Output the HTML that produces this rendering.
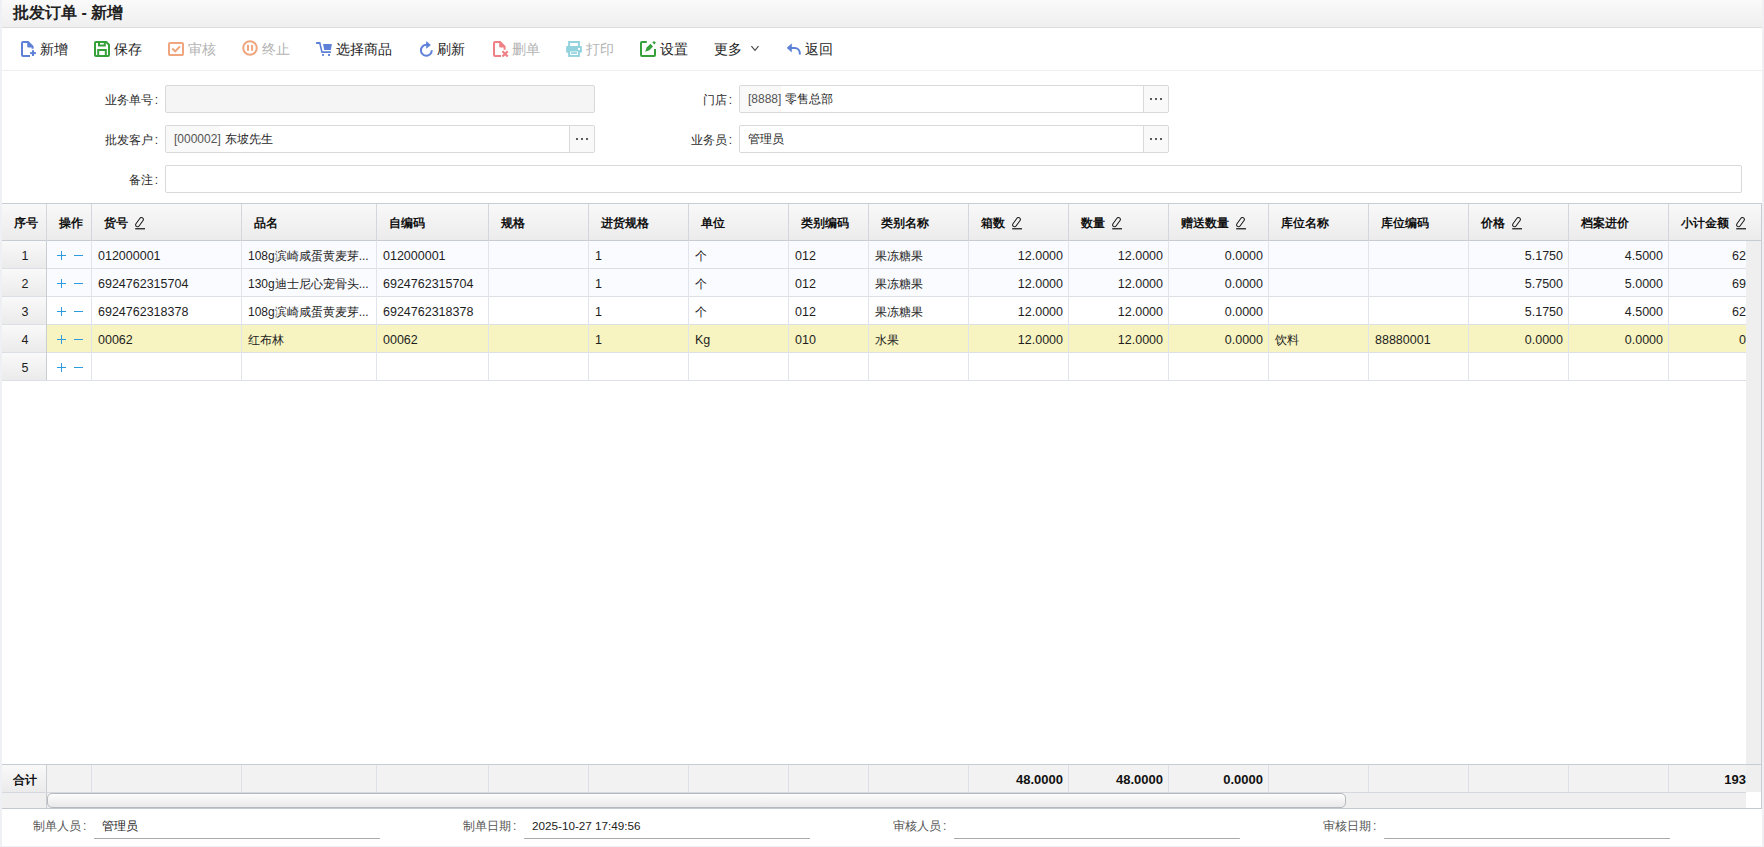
<!DOCTYPE html><html><head><meta charset="utf-8"><style>

*{box-sizing:border-box;margin:0;padding:0}
html,body{width:1764px;height:847px;overflow:hidden;background:#eef0f4;font-family:"Liberation Sans",sans-serif;color:#333}
.abs{position:absolute}
#pg{position:absolute;left:2px;top:0;width:1760px;height:846px;background:#fff;overflow:hidden}
.t{position:absolute;white-space:nowrap;line-height:14px}
.tb{position:absolute;white-space:nowrap;font-size:14px;line-height:16px;color:#1e1e1e}
.tb.dis{color:#b3b3b3}
.ic{position:absolute}
.lbl{position:absolute;font-size:12px;line-height:14px;color:#2a2a2a;text-align:right;white-space:nowrap}
.inp{position:absolute;border:1px solid #d9d9d9;border-radius:2px;background:#fff;height:28px}
.btn{position:absolute;top:0;bottom:0;width:25px;right:0;border-left:1px solid #d9d9d9;background:#f9f9f9;border-radius:0 2px 2px 0}
.dots{position:absolute;top:12px;left:6px;width:2px;height:2px;background:#5a5a5a;box-shadow:5px 0 0 #5a5a5a,10px 0 0 #5a5a5a}
.hl{position:absolute;height:1px}
.vl{position:absolute;width:1px}
.hd{position:absolute;font-size:12px;line-height:14px;font-weight:bold;color:#111;white-space:nowrap}
.cell{position:absolute;font-size:12px;line-height:14px;color:#1e1e1e;white-space:nowrap}
.r{text-align:right}

</style></head><body>
<div id="pg">
<div class="abs" style="left:0;top:0;width:1760px;height:27px;background:linear-gradient(#fafafa,#efefef)"></div>
<div class="hl" style="left:0;top:27px;width:1760px;background:#dddddd"></div>
<div class="t" style="left:11px;top:4px;font-size:16px;line-height:18px;font-weight:bold;color:#222">批发订单 - 新增</div>
<div class="hl" style="left:0;top:70px;width:1760px;background:#eeeeee"></div>
<div class="ic" style="left:16px;top:38px;width:22px;height:22px"><svg width="22" height="22" viewBox="0 0 22 22"><g fill="#5e81d7">
<path d="M3 5 Q3 3 5 3 H10.5 L15.6 8.2 V10.8 H13.6 V9.6 H10.5 Q9.2 9.6 9.2 8.3 V5 H5 V17 H12 V19 H5 Q3 19 3 17 Z"/>
<rect x="14" y="12.2" width="2" height="5.8"/><rect x="12.1" y="14.1" width="5.8" height="2"/></g></svg></div>
<div class="tb" style="left:38px;top:41px">新增</div>
<div class="ic" style="left:89px;top:38px;width:22px;height:22px"><svg width="22" height="22" viewBox="0 0 22 22"><g fill="none" stroke="#36a03b" stroke-width="2">
<path d="M5 4 H15.3 L18 6.7 V17 Q18 18 17 18 H5 Q4 18 4 17 V5 Q4 4 5 4 Z"/>
<path d="M8 4 V7.6 H13.8 V4"/><path d="M7.2 18 V12 H14.8 V18"/></g></svg></div>
<div class="tb" style="left:112px;top:41px">保存</div>
<div class="ic" style="left:163px;top:38px;width:22px;height:22px"><svg width="22" height="22" viewBox="0 0 22 22"><g fill="none" stroke="#efa67e" stroke-width="2">
<rect x="4" y="4.9" width="14" height="12.2" rx="1.2"/>
<path d="M7.2 10.4 L10.3 13.3 L15 8.4"/></g></svg></div>
<div class="tb dis" style="left:186px;top:41px">审核</div>
<div class="ic" style="left:237px;top:37px;width:22px;height:22px"><svg width="22" height="22" viewBox="0 0 22 22"><g fill="none" stroke="#efa67e" stroke-width="2">
<circle cx="11" cy="11" r="6.8"/></g><g fill="#efa67e"><rect x="8" y="7.8" width="2" height="6"/><rect x="12.1" y="7.8" width="2" height="6"/></g></svg></div>
<div class="tb dis" style="left:260px;top:41px">终止</div>
<div class="ic" style="left:311px;top:37px;width:22px;height:22px"><svg width="22" height="22" viewBox="0 0 22 22"><g fill="#5e81d7">
<path d="M3.1 5 H7.4 L9.6 14.2 H17.9 V15.9 H8.4 L6.2 7 H3.1 Z"/>
<path d="M10.1 7 H18.9 L17.8 12.9 H11.2 Z"/>
<rect x="9.1" y="17" width="1.8" height="1.9"/><rect x="15" y="17" width="2" height="1.9"/></g></svg></div>
<div class="tb" style="left:334px;top:41px">选择商品</div>
<div class="ic" style="left:413px;top:37px;width:22px;height:22px"><svg width="22" height="22" viewBox="0 0 22 22"><g fill="none" stroke="#5e81d7" stroke-width="2">
<path d="M16.8 13.3 A5.45 5.45 0 1 1 11.35 7.85 H12.5"/></g>
<path fill="#5e81d7" d="M11.2 4.1 L15.9 7.9 L11.2 11.8 Z"/></svg></div>
<div class="tb" style="left:435px;top:41px">刷新</div>
<div class="ic" style="left:488px;top:38px;width:22px;height:22px"><svg width="22" height="22" viewBox="0 0 22 22"><g fill="#ef8085">
<path d="M3 5 Q3 3 5 3 H10.5 L15.6 8.2 V11.8 H13.6 V9.6 H10.5 Q9.2 9.6 9.2 8.3 V5 H5 V17 H11 V19 H5 Q3 19 3 17 Z"/></g>
<path d="M13.2 14 L17 17.8 M17 14 L13.2 17.8" stroke="#ef8085" stroke-width="2.2" stroke-linecap="square"/></svg></div>
<div class="tb dis" style="left:510px;top:41px">删单</div>
<div class="ic" style="left:561px;top:38px;width:22px;height:22px"><svg width="22" height="22" viewBox="0 0 22 22"><g fill="#92d3de">
<path d="M5.1 3.1 H16.9 V8.2 H14.9 V5.1 H7.1 V8.2 H5.1 Z"/>
<path d="M4.3 8 H17.7 Q18.9 8 18.9 9.2 V13.6 Q18.9 14.8 17.7 14.8 H4.3 Q3.1 14.8 3.1 13.6 V9.2 Q3.1 8 4.3 8 Z M15 9.9 V11.9 H17 V9.9 Z"/>
<rect x="5.1" y="12.2" width="11.8" height="6.7"/></g>
<rect x="7.1" y="13.5" width="7.8" height="3.5" fill="#fff"/>
<rect x="8.1" y="14.2" width="5.8" height="1.7" fill="#92d3de"/></svg></div>
<div class="tb dis" style="left:584px;top:41px">打印</div>
<div class="ic" style="left:635px;top:38px;width:22px;height:22px"><svg width="22" height="22" viewBox="0 0 22 22"><g fill="none" stroke="#36a03b" stroke-width="2">
<path d="M9.8 4 H5 Q4 4 4 5 V17 Q4 18 5 18 H17 Q18 18 18 17 V11"/></g>
<path fill="#36a03b" d="M8.2 13.8 L9.6 9.4 L13.5 5.8 L16 8.4 L12.4 12.2 Z"/>
<path fill="#36a03b" d="M15.3 4.6 L17 3 L18.9 4.8 L17.3 6.4 Z"/></svg></div>
<div class="tb" style="left:658px;top:41px">设置</div>
<div class="ic" style="left:781px;top:38px;width:22px;height:22px"><svg width="22" height="22" viewBox="0 0 22 22">
<path fill="#5e81d7" stroke="#5e81d7" stroke-width="0.8" stroke-linejoin="round" d="M4.2 9.9 L8.4 6.1 V13.7 Z"/>
<path fill="none" stroke="#5e81d7" stroke-width="2" d="M8 9.9 H11.8 A5 5 0 0 1 16.8 14.9 V16.6"/></svg></div>
<div class="tb" style="left:803px;top:41px">返回</div>
<div class="tb" style="left:712px;top:41px">更多</div>
<svg class="ic" style="left:746px;top:43px" width="14" height="10" viewBox="0 0 14 10"><path d="M3.4 3.2 L7 7.4 L10.5 3.2" fill="none" stroke="#444" stroke-width="1.1"/></svg>
<div class="lbl" style="left:13px;width:150px;top:93px;padding-right:7px">业务单号<span style="margin-left:2px">:</span></div>
<div class="inp" style="left:163px;top:85px;width:430px;background:#f5f5f5"></div>
<div class="lbl" style="left:587px;width:150px;top:93px;padding-right:7px">门店<span style="margin-left:2px">:</span></div>
<div class="inp" style="left:737px;top:85px;width:430px;background:#fff"><div class="abs" style="left:0;top:0;width:41px;height:26px;background:#f9f9f9;border-radius:3px 0 0 3px"></div><div class="cell" style="left:8px;top:6px;color:#555">[8888]</div><div class="cell" style="left:45px;top:6px;">零售总部</div><div class="btn"><div class="dots"></div></div></div>
<div class="lbl" style="left:13px;width:150px;top:133px;padding-right:7px">批发客户<span style="margin-left:2px">:</span></div>
<div class="inp" style="left:163px;top:125px;width:430px;background:#fff"><div class="abs" style="left:0;top:0;width:54px;height:26px;background:#f9f9f9;border-radius:3px 0 0 3px"></div><div class="cell" style="left:8px;top:6px;color:#555">[000002]</div><div class="cell" style="left:59px;top:6px;">东坡先生</div><div class="btn"><div class="dots"></div></div></div>
<div class="lbl" style="left:587px;width:150px;top:133px;padding-right:7px">业务员<span style="margin-left:2px">:</span></div>
<div class="inp" style="left:737px;top:125px;width:430px;background:#fff"><div class="cell" style="left:8px;top:6px">管理员</div><div class="btn"><div class="dots"></div></div></div>
<div class="lbl" style="left:13px;width:150px;top:173px;padding-right:7px">备注<span style="margin-left:2px">:</span></div>
<div class="inp" style="left:163px;top:165px;width:1577px;background:#fff"></div>
<div class="abs" style="left:0;top:203px;width:1760px;height:38px;background:linear-gradient(#f9f9f9,#ebebeb)"></div>
<div class="hl" style="left:0;top:203px;width:1760px;background:#c6ccd2"></div>
<div class="hl" style="left:0;top:240px;width:1760px;background:#c6ccd2"></div>
<div class="hd" style="left:2px;width:44px;text-align:center;top:216px">序号</div>
<div class="hd" style="left:46px;width:45px;text-align:center;top:216px">操作</div>
<div class="vl" style="left:44px;top:204px;height:37px;background:#d3d7dc"></div>
<div class="hd" style="left:102px;top:216px">货号</div>
<svg width="12" height="14" viewBox="0 0 12 14" style="position:absolute;left:133px;top:216px"><rect x="-5.3" y="-1.9" width="10.6" height="3.8" rx="1.9" transform="translate(4.5 6.1) rotate(-54)" fill="none" stroke="#1a1a1a" stroke-width="1.05"/><rect x="0.2" y="12.1" width="9.8" height="1.3" fill="#222"/></svg>
<div class="vl" style="left:89px;top:204px;height:37px;background:#d3d7dc"></div>
<div class="hd" style="left:252px;top:216px">品名</div>
<div class="vl" style="left:239px;top:204px;height:37px;background:#d3d7dc"></div>
<div class="hd" style="left:387px;top:216px">自编码</div>
<div class="vl" style="left:374px;top:204px;height:37px;background:#d3d7dc"></div>
<div class="hd" style="left:499px;top:216px">规格</div>
<div class="vl" style="left:486px;top:204px;height:37px;background:#d3d7dc"></div>
<div class="hd" style="left:599px;top:216px">进货规格</div>
<div class="vl" style="left:586px;top:204px;height:37px;background:#d3d7dc"></div>
<div class="hd" style="left:699px;top:216px">单位</div>
<div class="vl" style="left:686px;top:204px;height:37px;background:#d3d7dc"></div>
<div class="hd" style="left:799px;top:216px">类别编码</div>
<div class="vl" style="left:786px;top:204px;height:37px;background:#d3d7dc"></div>
<div class="hd" style="left:879px;top:216px">类别名称</div>
<div class="vl" style="left:866px;top:204px;height:37px;background:#d3d7dc"></div>
<div class="hd" style="left:979px;top:216px">箱数</div>
<svg width="12" height="14" viewBox="0 0 12 14" style="position:absolute;left:1010px;top:216px"><rect x="-5.3" y="-1.9" width="10.6" height="3.8" rx="1.9" transform="translate(4.5 6.1) rotate(-54)" fill="none" stroke="#1a1a1a" stroke-width="1.05"/><rect x="0.2" y="12.1" width="9.8" height="1.3" fill="#222"/></svg>
<div class="vl" style="left:966px;top:204px;height:37px;background:#d3d7dc"></div>
<div class="hd" style="left:1079px;top:216px">数量</div>
<svg width="12" height="14" viewBox="0 0 12 14" style="position:absolute;left:1110px;top:216px"><rect x="-5.3" y="-1.9" width="10.6" height="3.8" rx="1.9" transform="translate(4.5 6.1) rotate(-54)" fill="none" stroke="#1a1a1a" stroke-width="1.05"/><rect x="0.2" y="12.1" width="9.8" height="1.3" fill="#222"/></svg>
<div class="vl" style="left:1066px;top:204px;height:37px;background:#d3d7dc"></div>
<div class="hd" style="left:1179px;top:216px">赠送数量</div>
<svg width="12" height="14" viewBox="0 0 12 14" style="position:absolute;left:1234px;top:216px"><rect x="-5.3" y="-1.9" width="10.6" height="3.8" rx="1.9" transform="translate(4.5 6.1) rotate(-54)" fill="none" stroke="#1a1a1a" stroke-width="1.05"/><rect x="0.2" y="12.1" width="9.8" height="1.3" fill="#222"/></svg>
<div class="vl" style="left:1166px;top:204px;height:37px;background:#d3d7dc"></div>
<div class="hd" style="left:1279px;top:216px">库位名称</div>
<div class="vl" style="left:1266px;top:204px;height:37px;background:#d3d7dc"></div>
<div class="hd" style="left:1379px;top:216px">库位编码</div>
<div class="vl" style="left:1366px;top:204px;height:37px;background:#d3d7dc"></div>
<div class="hd" style="left:1479px;top:216px">价格</div>
<svg width="12" height="14" viewBox="0 0 12 14" style="position:absolute;left:1510px;top:216px"><rect x="-5.3" y="-1.9" width="10.6" height="3.8" rx="1.9" transform="translate(4.5 6.1) rotate(-54)" fill="none" stroke="#1a1a1a" stroke-width="1.05"/><rect x="0.2" y="12.1" width="9.8" height="1.3" fill="#222"/></svg>
<div class="vl" style="left:1466px;top:204px;height:37px;background:#d3d7dc"></div>
<div class="hd" style="left:1579px;top:216px">档案进价</div>
<div class="vl" style="left:1566px;top:204px;height:37px;background:#d3d7dc"></div>
<div class="hd" style="left:1679px;top:216px">小计金额</div>
<svg width="12" height="14" viewBox="0 0 12 14" style="position:absolute;left:1734px;top:216px"><rect x="-5.3" y="-1.9" width="10.6" height="3.8" rx="1.9" transform="translate(4.5 6.1) rotate(-54)" fill="none" stroke="#1a1a1a" stroke-width="1.05"/><rect x="0.2" y="12.1" width="9.8" height="1.3" fill="#222"/></svg>
<div class="vl" style="left:1666px;top:204px;height:37px;background:#d3d7dc"></div>
<div class="abs" style="left:0;top:241px;width:1744px;height:140px;overflow:hidden">
<div class="abs" style="left:45px;top:0px;width:1699px;height:27px;background:#fafbfe"></div>
<div class="abs" style="left:0;top:0px;width:44px;height:27px;background:linear-gradient(#f9f9f9,#ebebeb)"></div>
<div class="hl" style="left:0;top:27px;width:1744px;background:#dcdfe4"></div>
<div class="cell" style="left:1px;width:44px;text-align:center;top:8px;font-size:12.5px">1</div>
<div class="abs" style="left:55px;top:10px;width:9px;height:1px;top:14px;background:#2d9be0"></div>
<div class="abs" style="left:59px;top:10px;width:1px;height:9px;background:#2d9be0"></div>
<div class="abs" style="left:72px;top:14px;width:9px;height:1px;background:#2d9be0"></div>
<div class="cell" style="left:96px;top:8px;font-size:12.5px">012000001</div>
<div class="cell" style="left:246px;top:8px">108g滨崎咸蛋黄麦芽...</div>
<div class="cell" style="left:381px;top:8px;font-size:12.5px">012000001</div>
<div class="cell" style="left:593px;top:8px;font-size:12.5px">1</div>
<div class="cell" style="left:693px;top:8px">个</div>
<div class="cell" style="left:793px;top:8px;font-size:12.5px">012</div>
<div class="cell" style="left:873px;top:8px">果冻糖果</div>
<div class="cell r" style="left:966px;width:95px;top:8px;font-size:12.5px">12.0000</div>
<div class="cell r" style="left:1066px;width:95px;top:8px;font-size:12.5px">12.0000</div>
<div class="cell r" style="left:1166px;width:95px;top:8px;font-size:12.5px">0.0000</div>
<div class="cell r" style="left:1466px;width:95px;top:8px;font-size:12.5px">5.1750</div>
<div class="cell r" style="left:1566px;width:95px;top:8px;font-size:12.5px">4.5000</div>
<div class="cell r" style="left:1666px;width:78px;top:8px;font-size:12.5px">62</div>
<div class="abs" style="left:45px;top:28px;width:1699px;height:27px;background:#fafbfe"></div>
<div class="abs" style="left:0;top:28px;width:44px;height:27px;background:linear-gradient(#f9f9f9,#ebebeb)"></div>
<div class="hl" style="left:0;top:55px;width:1744px;background:#dcdfe4"></div>
<div class="cell" style="left:1px;width:44px;text-align:center;top:36px;font-size:12.5px">2</div>
<div class="abs" style="left:55px;top:38px;width:9px;height:1px;top:42px;background:#2d9be0"></div>
<div class="abs" style="left:59px;top:38px;width:1px;height:9px;background:#2d9be0"></div>
<div class="abs" style="left:72px;top:42px;width:9px;height:1px;background:#2d9be0"></div>
<div class="cell" style="left:96px;top:36px;font-size:12.5px">6924762315704</div>
<div class="cell" style="left:246px;top:36px">130g迪士尼心宠骨头...</div>
<div class="cell" style="left:381px;top:36px;font-size:12.5px">6924762315704</div>
<div class="cell" style="left:593px;top:36px;font-size:12.5px">1</div>
<div class="cell" style="left:693px;top:36px">个</div>
<div class="cell" style="left:793px;top:36px;font-size:12.5px">012</div>
<div class="cell" style="left:873px;top:36px">果冻糖果</div>
<div class="cell r" style="left:966px;width:95px;top:36px;font-size:12.5px">12.0000</div>
<div class="cell r" style="left:1066px;width:95px;top:36px;font-size:12.5px">12.0000</div>
<div class="cell r" style="left:1166px;width:95px;top:36px;font-size:12.5px">0.0000</div>
<div class="cell r" style="left:1466px;width:95px;top:36px;font-size:12.5px">5.7500</div>
<div class="cell r" style="left:1566px;width:95px;top:36px;font-size:12.5px">5.0000</div>
<div class="cell r" style="left:1666px;width:78px;top:36px;font-size:12.5px">69</div>
<div class="abs" style="left:45px;top:56px;width:1699px;height:27px;background:#fff"></div>
<div class="abs" style="left:0;top:56px;width:44px;height:27px;background:linear-gradient(#f9f9f9,#ebebeb)"></div>
<div class="hl" style="left:0;top:83px;width:1744px;background:#dcdfe4"></div>
<div class="cell" style="left:1px;width:44px;text-align:center;top:64px;font-size:12.5px">3</div>
<div class="abs" style="left:55px;top:66px;width:9px;height:1px;top:70px;background:#2d9be0"></div>
<div class="abs" style="left:59px;top:66px;width:1px;height:9px;background:#2d9be0"></div>
<div class="abs" style="left:72px;top:70px;width:9px;height:1px;background:#2d9be0"></div>
<div class="cell" style="left:96px;top:64px;font-size:12.5px">6924762318378</div>
<div class="cell" style="left:246px;top:64px">108g滨崎咸蛋黄麦芽...</div>
<div class="cell" style="left:381px;top:64px;font-size:12.5px">6924762318378</div>
<div class="cell" style="left:593px;top:64px;font-size:12.5px">1</div>
<div class="cell" style="left:693px;top:64px">个</div>
<div class="cell" style="left:793px;top:64px;font-size:12.5px">012</div>
<div class="cell" style="left:873px;top:64px">果冻糖果</div>
<div class="cell r" style="left:966px;width:95px;top:64px;font-size:12.5px">12.0000</div>
<div class="cell r" style="left:1066px;width:95px;top:64px;font-size:12.5px">12.0000</div>
<div class="cell r" style="left:1166px;width:95px;top:64px;font-size:12.5px">0.0000</div>
<div class="cell r" style="left:1466px;width:95px;top:64px;font-size:12.5px">5.1750</div>
<div class="cell r" style="left:1566px;width:95px;top:64px;font-size:12.5px">4.5000</div>
<div class="cell r" style="left:1666px;width:78px;top:64px;font-size:12.5px">62</div>
<div class="abs" style="left:45px;top:84px;width:1699px;height:27px;background:#f7f4c1"></div>
<div class="abs" style="left:0;top:84px;width:44px;height:27px;background:linear-gradient(#f9f9f9,#ebebeb)"></div>
<div class="hl" style="left:0;top:111px;width:1744px;background:#dcdfe4"></div>
<div class="cell" style="left:1px;width:44px;text-align:center;top:92px;font-size:12.5px">4</div>
<div class="abs" style="left:55px;top:94px;width:9px;height:1px;top:98px;background:#2d9be0"></div>
<div class="abs" style="left:59px;top:94px;width:1px;height:9px;background:#2d9be0"></div>
<div class="abs" style="left:72px;top:98px;width:9px;height:1px;background:#2d9be0"></div>
<div class="cell" style="left:96px;top:92px;font-size:12.5px">00062</div>
<div class="cell" style="left:246px;top:92px">红布林</div>
<div class="cell" style="left:381px;top:92px;font-size:12.5px">00062</div>
<div class="cell" style="left:593px;top:92px;font-size:12.5px">1</div>
<div class="cell" style="left:693px;top:92px;font-size:12.5px">Kg</div>
<div class="cell" style="left:793px;top:92px;font-size:12.5px">010</div>
<div class="cell" style="left:873px;top:92px">水果</div>
<div class="cell r" style="left:966px;width:95px;top:92px;font-size:12.5px">12.0000</div>
<div class="cell r" style="left:1066px;width:95px;top:92px;font-size:12.5px">12.0000</div>
<div class="cell r" style="left:1166px;width:95px;top:92px;font-size:12.5px">0.0000</div>
<div class="cell" style="left:1273px;top:92px">饮料</div>
<div class="cell" style="left:1373px;top:92px;font-size:12.5px">88880001</div>
<div class="cell r" style="left:1466px;width:95px;top:92px;font-size:12.5px">0.0000</div>
<div class="cell r" style="left:1566px;width:95px;top:92px;font-size:12.5px">0.0000</div>
<div class="cell r" style="left:1666px;width:78px;top:92px;font-size:12.5px">0</div>
<div class="abs" style="left:45px;top:112px;width:1699px;height:27px;background:#fff"></div>
<div class="abs" style="left:0;top:112px;width:44px;height:27px;background:linear-gradient(#f9f9f9,#ebebeb)"></div>
<div class="hl" style="left:0;top:139px;width:1744px;background:#dcdfe4"></div>
<div class="cell" style="left:1px;width:44px;text-align:center;top:120px;font-size:12.5px">5</div>
<div class="abs" style="left:55px;top:122px;width:9px;height:1px;top:126px;background:#2d9be0"></div>
<div class="abs" style="left:59px;top:122px;width:1px;height:9px;background:#2d9be0"></div>
<div class="abs" style="left:72px;top:126px;width:9px;height:1px;background:#2d9be0"></div>
</div>
<div class="vl" style="left:44px;top:241px;height:139px;background:#c9ced3"></div>
<div class="vl" style="left:89px;top:241px;height:139px;background:#e1e4ea"></div>
<div class="vl" style="left:239px;top:241px;height:139px;background:#e1e4ea"></div>
<div class="vl" style="left:374px;top:241px;height:139px;background:#e1e4ea"></div>
<div class="vl" style="left:486px;top:241px;height:139px;background:#e1e4ea"></div>
<div class="vl" style="left:586px;top:241px;height:139px;background:#e1e4ea"></div>
<div class="vl" style="left:686px;top:241px;height:139px;background:#e1e4ea"></div>
<div class="vl" style="left:786px;top:241px;height:139px;background:#e1e4ea"></div>
<div class="vl" style="left:866px;top:241px;height:139px;background:#e1e4ea"></div>
<div class="vl" style="left:966px;top:241px;height:139px;background:#e1e4ea"></div>
<div class="vl" style="left:1066px;top:241px;height:139px;background:#e1e4ea"></div>
<div class="vl" style="left:1166px;top:241px;height:139px;background:#e1e4ea"></div>
<div class="vl" style="left:1266px;top:241px;height:139px;background:#e1e4ea"></div>
<div class="vl" style="left:1366px;top:241px;height:139px;background:#e1e4ea"></div>
<div class="vl" style="left:1466px;top:241px;height:139px;background:#e1e4ea"></div>
<div class="vl" style="left:1566px;top:241px;height:139px;background:#e1e4ea"></div>
<div class="vl" style="left:1666px;top:241px;height:139px;background:#e1e4ea"></div>
<div class="abs" style="left:1744px;top:241px;width:15px;height:551px;background:#efefef"></div>
<div class="vl" style="left:1759px;top:203px;height:606px;background:#c6ccd2"></div>
<div class="hl" style="left:0;top:764px;width:1760px;background:#c6ccd2"></div>
<div class="abs" style="left:0;top:765px;width:1744px;height:27px;background:#f2f2f2"></div>
<div class="abs" style="left:0;top:765px;width:44px;height:27px;background:linear-gradient(#f9f9f9,#ebebeb)"></div>
<div class="hl" style="left:0;top:792px;width:1744px;background:#d5d9de"></div>
<div class="hd" style="left:1px;width:44px;text-align:center;top:773px">合计</div>
<div class="vl" style="left:44px;top:765px;height:27px;background:#c9ced3"></div>
<div class="vl" style="left:89px;top:765px;height:27px;background:#dde1e7"></div>
<div class="vl" style="left:239px;top:765px;height:27px;background:#dde1e7"></div>
<div class="vl" style="left:374px;top:765px;height:27px;background:#dde1e7"></div>
<div class="vl" style="left:486px;top:765px;height:27px;background:#dde1e7"></div>
<div class="vl" style="left:586px;top:765px;height:27px;background:#dde1e7"></div>
<div class="vl" style="left:686px;top:765px;height:27px;background:#dde1e7"></div>
<div class="vl" style="left:786px;top:765px;height:27px;background:#dde1e7"></div>
<div class="vl" style="left:866px;top:765px;height:27px;background:#dde1e7"></div>
<div class="vl" style="left:966px;top:765px;height:27px;background:#dde1e7"></div>
<div class="vl" style="left:1066px;top:765px;height:27px;background:#dde1e7"></div>
<div class="vl" style="left:1166px;top:765px;height:27px;background:#dde1e7"></div>
<div class="vl" style="left:1266px;top:765px;height:27px;background:#dde1e7"></div>
<div class="vl" style="left:1366px;top:765px;height:27px;background:#dde1e7"></div>
<div class="vl" style="left:1466px;top:765px;height:27px;background:#dde1e7"></div>
<div class="vl" style="left:1566px;top:765px;height:27px;background:#dde1e7"></div>
<div class="vl" style="left:1666px;top:765px;height:27px;background:#dde1e7"></div>
<div class="hd r" style="left:966px;width:95px;top:773px;font-size:13px">48.0000</div>
<div class="hd r" style="left:1066px;width:95px;top:773px;font-size:13px">48.0000</div>
<div class="hd r" style="left:1166px;width:95px;top:773px;font-size:13px">0.0000</div>
<div class="hd r" style="left:1666px;width:78px;top:773px;font-size:13px">193</div>
<div class="abs" style="left:0;top:793px;width:1744px;height:15px;background:#efefef"></div>
<div class="vl" style="left:44px;top:793px;height:15px;background:#c9ced3"></div>
<div class="abs" style="left:45px;top:793px;width:1299px;height:15px;border:1px solid #b5b9bd;border-radius:5px;background:linear-gradient(#fdfdfd,#e9e9e9)"></div>
<div class="hl" style="left:0;top:808px;width:1760px;background:#c2c8ce"></div>
<div class="lbl" style="left:31px;top:819px;text-align:left;color:#555">制单人员<span style="margin-left:2px">:</span></div>
<div class="cell" style="left:100px;top:819px;color:#222">管理员</div>
<div class="hl" style="left:92px;top:838px;width:286px;background:#a9a9a9;border-radius:1px"></div>
<div class="lbl" style="left:461px;top:819px;text-align:left;color:#555">制单日期<span style="margin-left:2px">:</span></div>
<div class="cell" style="left:530px;top:819px;color:#222;font-size:11.7px">2025-10-27 17:49:56</div>
<div class="hl" style="left:522px;top:838px;width:286px;background:#a9a9a9;border-radius:1px"></div>
<div class="lbl" style="left:891px;top:819px;text-align:left;color:#555">审核人员<span style="margin-left:2px">:</span></div>
<div class="hl" style="left:952px;top:838px;width:286px;background:#a9a9a9;border-radius:1px"></div>
<div class="lbl" style="left:1321px;top:819px;text-align:left;color:#555">审核日期<span style="margin-left:2px">:</span></div>
<div class="hl" style="left:1382px;top:838px;width:286px;background:#a9a9a9;border-radius:1px"></div>
</div></body></html>
